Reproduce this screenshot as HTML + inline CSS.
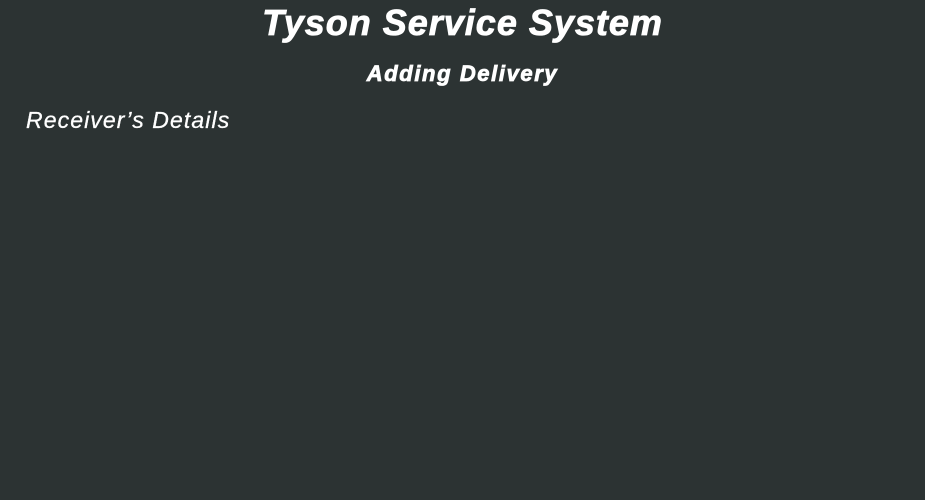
<!DOCTYPE html>
<html><head><style>
html,body{margin:0;padding:0;width:925px;height:500px;background:#2c3333;overflow:hidden;font-family:"Liberation Sans",sans-serif;color:#fff}
.t{position:absolute;left:0;width:925px;text-align:center;font-style:italic;font-weight:bold;-webkit-text-stroke:0.8px #fff}
</style></head><body>
<div class="t" style="top:2px;font-size:36px;line-height:42px;letter-spacing:1px;">Tyson Service System</div>
<div class="t" style="top:60px;font-size:22px;line-height:28px;letter-spacing:1.6px;">Adding Delivery</div>
<div style="position:absolute;left:26px;top:106px;font-size:23px;line-height:28px;font-style:italic;letter-spacing:1.1px;-webkit-text-stroke:0.3px #fff;">Receiver’s Details</div>
</body></html>
